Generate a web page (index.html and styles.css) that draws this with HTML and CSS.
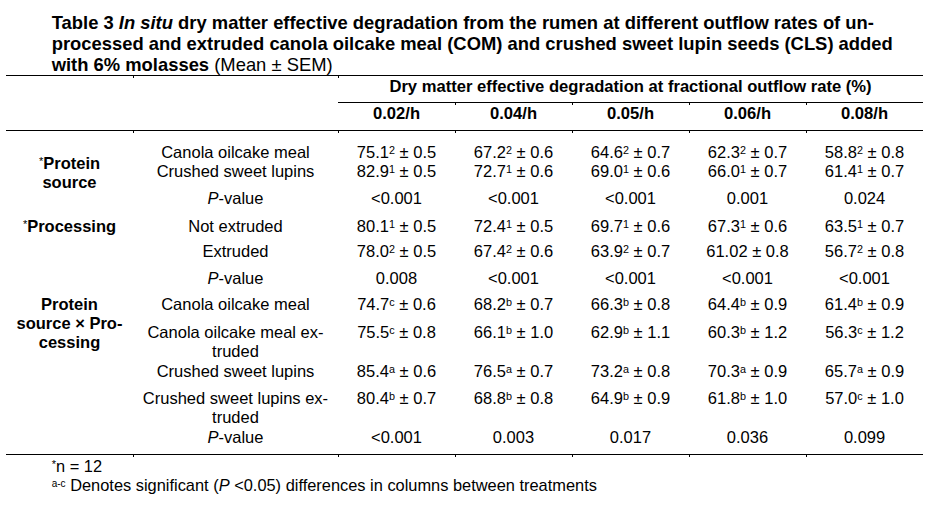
FILE: index.html
```html
<!DOCTYPE html>
<html lang="en">
<head>
<meta charset="utf-8">
<title>Table 3</title>
<link rel="stylesheet" href="styles.css">
</head>
<body>
<div class="page">
  <h1 class="title">Table 3 <i>In situ</i> dry matter effective degradation from the rumen at different outflow rates of un-<br>processed and extruded canola oilcake meal (COM) and crushed sweet lupin seeds (CLS) added<br>with 6% molasses <span class="plain">(Mean ± SEM)</span></h1>
  <table class="tbl">
    <colgroup>
      <col class="col-group">
      <col class="col-label">
      <col class="col-val" span="5">
    </colgroup>
    <thead>
      <tr class="head-1">
        <th rowspan="2" class="edge"></th>
        <th rowspan="2" class="edge tick"></th>
        <th colspan="5" class="span-head tick">Dry matter effective degradation at fractional outflow rate (%)</th>
      </tr>
      <tr class="head-2">
        <th>0.02/h</th>
        <th class="tick">0.04/h</th>
        <th class="tick">0.05/h</th>
        <th class="tick">0.06/h</th>
        <th class="tick">0.08/h</th>
      </tr>
    </thead>
    <tbody>
      <tr class="row-first">
        <td rowspan="3" class="group group-protein"><span class="ast">*</span>Protein<br>source</td>
        <td class="tick">Canola oilcake meal</td>
        <td class="tick">75.1<sup>2</sup> ± 0.5</td>
        <td class="tick">67.2<sup>2</sup> ± 0.6</td>
        <td class="tick">64.6<sup>2</sup> ± 0.7</td>
        <td class="tick">62.3<sup>2</sup> ± 0.7</td>
        <td class="tick">58.8<sup>2</sup> ± 0.8</td>
      </tr>
      <tr class="row-cont">
        <td>Crushed sweet lupins</td>
        <td>82.9<sup>1</sup> ± 0.5</td>
        <td>72.7<sup>1</sup> ± 0.6</td>
        <td>69.0<sup>1</sup> ± 0.6</td>
        <td>66.0<sup>1</sup> ± 0.7</td>
        <td>61.4<sup>1</sup> ± 0.7</td>
      </tr>
      <tr class="row-8">
        <td><i>P</i>-value</td>
        <td>&lt;0.001</td>
        <td>&lt;0.001</td>
        <td>&lt;0.001</td>
        <td>0.001</td>
        <td>0.024</td>
      </tr>
      <tr class="row-9">
        <td rowspan="3" class="group"><span class="ast">*</span>Processing</td>
        <td>Not extruded</td>
        <td>80.1<sup>1</sup> ± 0.5</td>
        <td>72.4<sup>1</sup> ± 0.5</td>
        <td>69.7<sup>1</sup> ± 0.6</td>
        <td>67.3<sup>1</sup> ± 0.6</td>
        <td>63.5<sup>1</sup> ± 0.7</td>
      </tr>
      <tr class="row-6">
        <td>Extruded</td>
        <td>78.0<sup>2</sup> ± 0.5</td>
        <td>67.4<sup>2</sup> ± 0.6</td>
        <td>63.9<sup>2</sup> ± 0.7</td>
        <td>61.02 ± 0.8</td>
        <td>56.7<sup>2</sup> ± 0.8</td>
      </tr>
      <tr class="row-8">
        <td><i>P</i>-value</td>
        <td>0.008</td>
        <td>&lt;0.001</td>
        <td>&lt;0.001</td>
        <td>&lt;0.001</td>
        <td>&lt;0.001</td>
      </tr>
      <tr class="row-7">
        <td rowspan="5" class="group last">Protein<br>source × Pro-<br>cessing</td>
        <td>Canola oilcake meal</td>
        <td>74.7<sup>c</sup> ± 0.6</td>
        <td>68.2<sup>b</sup> ± 0.7</td>
        <td>66.3<sup>b</sup> ± 0.8</td>
        <td>64.4<sup>b</sup> ± 0.9</td>
        <td>61.4<sup>b</sup> ± 0.9</td>
      </tr>
      <tr class="row-9">
        <td>Canola oilcake meal ex-<br>truded</td>
        <td>75.5<sup>c</sup> ± 0.8</td>
        <td>66.1<sup>b</sup> ± 1.0</td>
        <td>62.9<sup>b</sup> ± 1.1</td>
        <td>60.3<sup>b</sup> ± 1.2</td>
        <td>56.3<sup>c</sup> ± 1.2</td>
      </tr>
      <tr class="row-1">
        <td>Crushed sweet lupins</td>
        <td>85.4<sup>a</sup> ± 0.6</td>
        <td>76.5<sup>a</sup> ± 0.7</td>
        <td>73.2<sup>a</sup> ± 0.8</td>
        <td>70.3<sup>a</sup> ± 0.9</td>
        <td>65.7<sup>a</sup> ± 0.9</td>
      </tr>
      <tr class="row-8">
        <td>Crushed sweet lupins ex-<br>truded</td>
        <td>80.4<sup>b</sup> ± 0.7</td>
        <td>68.8<sup>b</sup> ± 0.8</td>
        <td>64.9<sup>b</sup> ± 0.9</td>
        <td>61.8<sup>b</sup> ± 1.0</td>
        <td>57.0<sup>c</sup> ± 1.0</td>
      </tr>
      <tr class="row-1 row-last">
        <td><i>P</i>-value</td>
        <td>&lt;0.001</td>
        <td>0.003</td>
        <td>0.017</td>
        <td>0.036</td>
        <td>0.099</td>
      </tr>
    </tbody>
    <tfoot>
      <tr class="tick-row">
        <td></td>
        <td class="tick"></td>
        <td class="tick"></td>
        <td class="tick"></td>
        <td class="tick"></td>
        <td class="tick"></td>
        <td class="tick"></td>
      </tr>
    </tfoot>
  </table>
  <div class="notes">
    <p class="note"><span class="ast">*</span>n = 12</p>
    <p class="note"><sup class="note-sup">a-c</sup> Denotes significant (<i>P</i> &lt;0.05) differences in columns between treatments</p>
  </div>
</div>
</body>
</html>
```

FILE: styles.css
```css
html, body {
  margin: 0;
  padding: 0;
  background: #ffffff;
}

body {
  font-family: "Liberation Sans", Arial, sans-serif;
  color: #000000;
}

.page {
  padding: 12px 0 0 6px;
  width: 917px;
}

.title {
  margin: 0 0 0 45.7px;
  font-size: 18.4px;
  line-height: 21px;
  font-weight: bold;
  white-space: nowrap;
}

.title .plain {
  font-weight: normal;
}

.tbl {
  border-collapse: separate;
  border-spacing: 0;
  table-layout: fixed;
  width: 917px;
  font-size: 16.5px;
  line-height: 19px;
}

.col-group { width: 127px; }
.col-label { width: 205px; }
.col-val { width: 117px; }

.tbl th,
.tbl td {
  padding: 0;
  text-align: center;
  vertical-align: top;
  white-space: nowrap;
  font-weight: normal;
}

.tbl th {
  font-weight: bold;
  font-size: 16.6px;
}

.tick {
  background-image: linear-gradient(#000000, #000000);
  background-position: left top;
  background-size: 1px 2px;
  background-repeat: no-repeat;
}

/* header rows */
.head-1 th {
  border-top: 1px solid #000000;
}

.head-1 .edge {
  border-bottom: 1px solid #000000;
}

.head-1 .span-head {
  padding: 1px 0 6px;
  border-bottom: 1px solid #000000;
}

.head-2 th {
  padding: 1px 0 7px;
  border-bottom: 1px solid #000000;
}

/* body rows */
.row-first > td { padding-top: 12px; }
.row-cont > td { padding-top: 0; }
.row-8 > td { padding-top: 8px; }
.row-9 > td { padding-top: 9px; }
.row-6 > td { padding-top: 6px; }
.row-7 > td { padding-top: 7px; }
.row-1 > td { padding-top: 1px; }

.row-last > td {
  padding-bottom: 7px;
  border-bottom: 1px solid #000000;
}

.tbl .group {
  font-weight: bold;
}

.tbl .group-protein {
  padding-top: 23px;
}

.tbl .group.last {
  border-bottom: 1px solid #000000;
}

.ast {
  font-weight: normal;
  font-size: 11px;
  vertical-align: 4px;
  line-height: 0;
}

sup {
  font-size: 10.8px;
  line-height: 0;
  vertical-align: 4.5px;
}

.tick-row td {
  height: 2px;
  line-height: 0;
  font-size: 0;
}

.notes {
  padding-left: 45.7px;
  font-size: 16.4px;
  line-height: 19px;
}

.note {
  margin: 0;
  white-space: nowrap;
}

.note-sup {
  font-size: 10px;
}
```
